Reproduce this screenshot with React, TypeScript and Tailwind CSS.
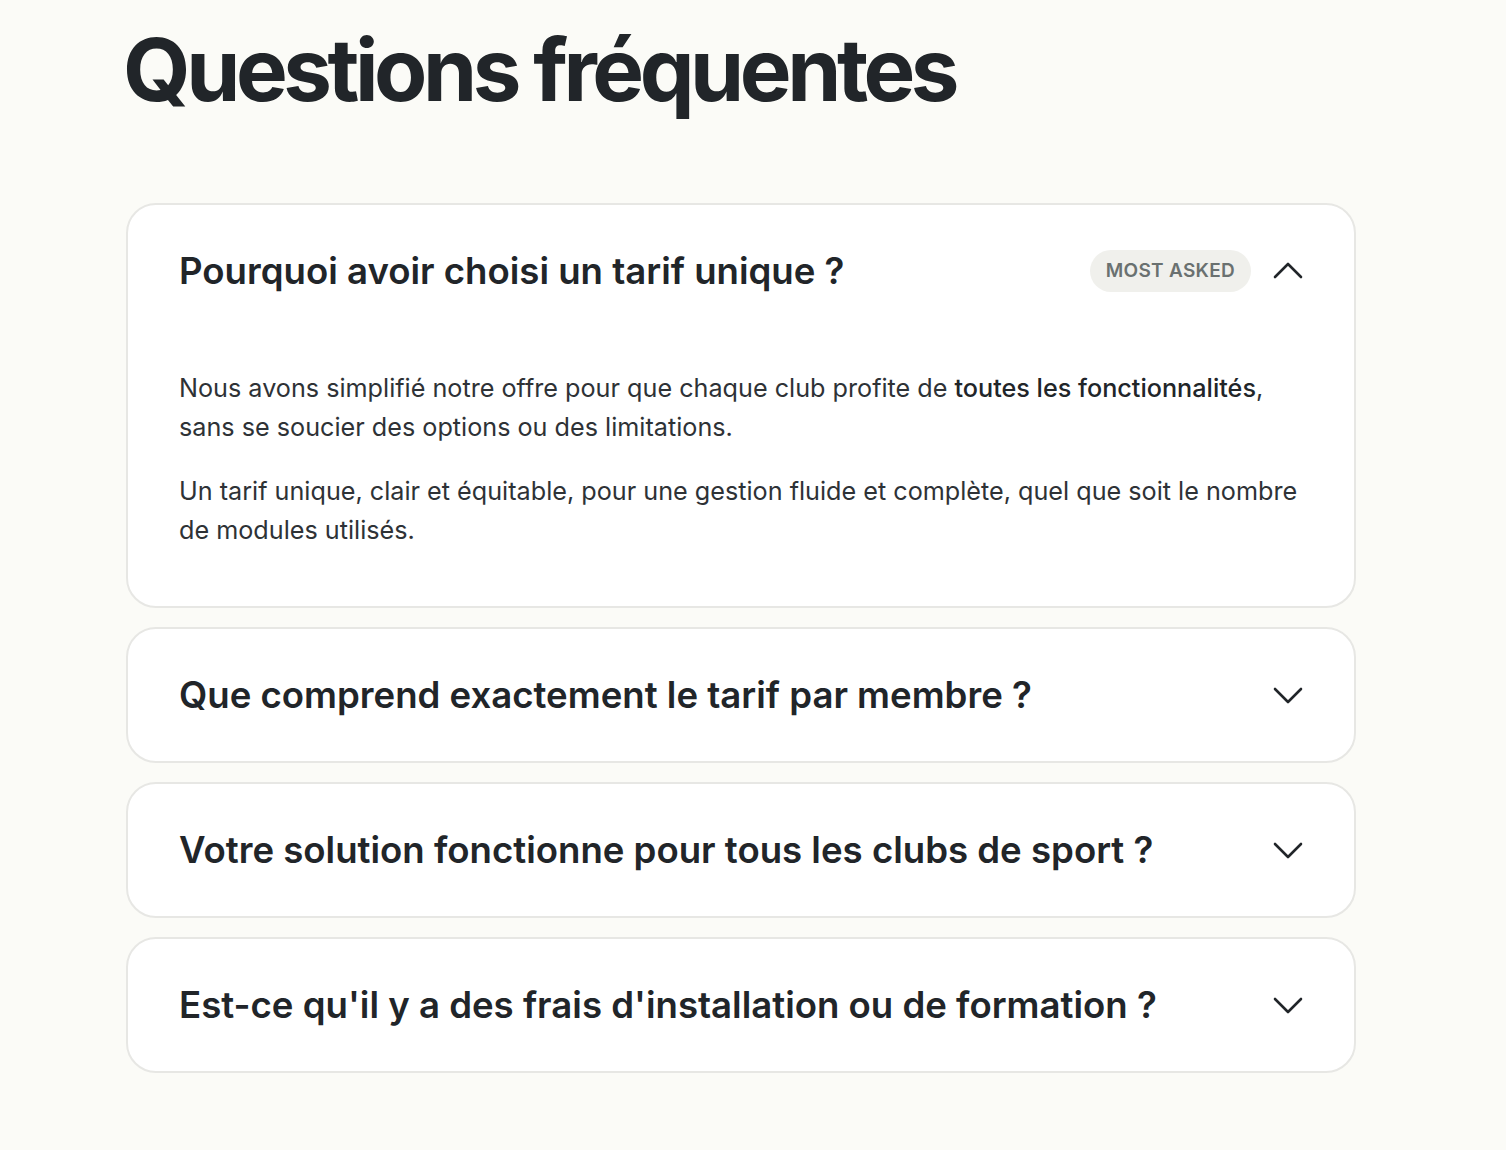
import { useState } from 'react';

const faqs = [
  {
    q: 'Pourquoi avoir choisi un tarif unique ?',
    badge: 'MOST ASKED',
  },
  { q: 'Que comprend exactement le tarif par membre ?' },
  { q: 'Votre solution fonctionne pour tous les clubs de sport ?' },
  { q: "Est-ce qu'il y a des frais d'installation ou de formation ?" },
];

function Chevron({ up }: { up: boolean }) {
  return (
    <svg width="32" height="32" viewBox="0 0 32 32" fill="none" className="shrink-0">
      <polyline
        points={up ? '3,22 16,9 29,22' : '3,10 16,23 29,10'}
        stroke="#212529"
        strokeWidth="2.6"
        strokeLinecap="round"
        strokeLinejoin="round"
      />
    </svg>
  );
}

export default function App() {
  const [open, setOpen] = useState(0);

  return (
    <div className="min-h-[1150px] bg-[#fbfbf7] font-['Inter',sans-serif] text-[#212529]">
      <div className="w-[1230px] ml-[126px] pt-[22px]">
        <h1 className="text-[87px] leading-[96px] font-bold tracking-[-0.051em] ml-[-3px]">Questions fréquentes</h1>

        <div className="mt-[85px] flex flex-col gap-[19px]">
          {faqs.map((f, i) => {
            const isOpen = open === i;
            return (
              <div key={i} className="bg-white border-2 border-[#e7e7e4] rounded-[30px]">
                <button
                  onClick={() => setOpen(isOpen ? -1 : i)}
                  className="w-full h-[132px] flex items-center justify-between pl-[51px] pr-[50px] text-left"
                >
                  <span className="text-[36.6px] leading-[40px] font-semibold">{f.q}</span>
                  <span className="flex items-center gap-[21px]">
                    {f.badge && (
                      <span className="h-[42px] px-[16px] rounded-full bg-[#f0f0ec] text-[#6a7170] text-[19px] font-semibold flex items-center tracking-[0.015em]">
                        {f.badge}
                      </span>
                    )}
                    <Chevron up={isOpen} />
                  </span>
                </button>
                {isOpen && (
                  <div className="pl-[51px] pr-[50px] pt-[32px] pb-[56px] text-[25.2px] leading-[39px] text-[#2e3236] space-y-[25px]">
                    <p>
                      Nous avons simplifié notre offre pour que chaque club profite de{' '}
                      <span className="font-medium text-[#212529]">toutes les fonctionnalités</span>, sans se soucier des
                      options ou des limitations.
                    </p>
                    <p>
                      Un tarif unique, clair et équitable, pour une gestion fluide et complète, quel que soit le nombre de
                      modules utilisés.
                    </p>
                  </div>
                )}
              </div>
            );
          })}
        </div>
      </div>
    </div>
  );
}
